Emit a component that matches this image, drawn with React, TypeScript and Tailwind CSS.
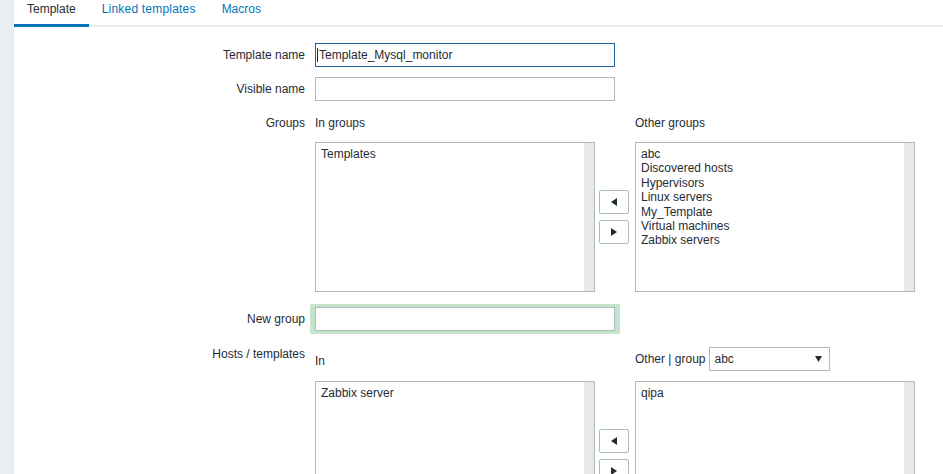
import React from "react";

const font = { fontFamily: '"Liberation Sans", Arial, sans-serif' };

function Caret({ dir }: { dir: "left" | "right" }) {
	return (
		<svg width="6" height="8" viewBox="0 0 6 8">
			{dir === "left" ? <path d="M6 0 L0 4 L6 8 Z" fill="#1f2c33" /> : <path d="M0 0 L6 4 L0 8 Z" fill="#1f2c33" />}
		</svg>
	);
}

function ListBox({ items }: { items: string[] }) {
	return (
		<div className="flex h-[150px] w-[280px] border border-[#acbbc2] bg-white">
			<div className="flex-1 pl-[5px] pt-[4px] leading-[14.4px]">
				{items.map((item) => <div key={item}>{item}</div>)}
			</div>
			<div className="w-[10px] bg-[#e8e8e8]" />
		</div>
	);
}

function MoveButtons() {
	return (
		<div className="flex w-[40px] flex-col items-start justify-center gap-[6px] pl-[4px]">
			<button className="flex h-[24px] w-[30px] items-center justify-center rounded-[2px] border border-[#acbbc2] bg-white">
				<Caret dir="left" />
			</button>
			<button className="flex h-[24px] w-[30px] items-center justify-center rounded-[2px] border border-[#acbbc2] bg-white">
				<Caret dir="right" />
			</button>
		</div>
	);
}

function Label({ children, className }: { children: React.ReactNode; className?: string }) {
	return <div className={`w-[301px] shrink-0 pr-[10px] text-right leading-[14px] ${className ?? ""}`}>{children}</div>;
}

export default function App() {
	return (
		<div className="flex h-[474px] w-[943px] overflow-hidden bg-white text-[12px] text-[#1f2c33]" style={font}>
			<div className="w-[14px] shrink-0 bg-[#ebeef0]" />
			<div className="flex-1">
				<div className="flex h-[27px] border-b-2 border-[#ebeef0]">
					<div className="-mb-[2px] border-b-[3px] border-[#0275b8] px-[13px] pt-[2px] leading-[14px]">Template</div>
					<div className="px-[13px] pt-[2px] leading-[14px] tracking-[0.2px] text-[#0275b8]">Linked templates</div>
					<div className="px-[13px] pt-[2px] leading-[14px] text-[#0275b8]">Macros</div>
				</div>

				<div className="mt-[16px] flex items-center">
					<Label>Template name</Label>
					<div className="flex h-[24px] w-[300px] items-center border border-[#1f65a6] pl-[1px]">
						<span className="mr-[1px] h-[14px] w-px bg-[#1f2c33]" />
						<span>Template_Mysql_monitor</span>
					</div>
				</div>

				<div className="mt-[10px] flex items-center">
					<Label>Visible name</Label>
					<div className="h-[24px] w-[300px] border border-[#acbbc2]" />
				</div>

				<div className="mt-[15px] flex">
					<Label>Groups</Label>
					<div>
						<div className="flex">
							<div className="w-[320px] leading-[14px]">In groups</div>
							<div className="leading-[14px]">Other groups</div>
						</div>
						<div className="mt-[12px] flex">
							<ListBox items={["Templates"]} />
							<MoveButtons />
							<ListBox items={["abc", "Discovered hosts", "Hypervisors", "Linux servers", "My_Template", "Virtual machines", "Zabbix servers"]} />
						</div>
					</div>
				</div>

				<div className="mt-[12px] flex items-center">
					<Label>New group</Label>
					<div className="-ml-[5px] rounded-[2px] bg-[#c6e4c9] px-[5px] py-[3px]">
						<div className="h-[24px] w-[300px] border border-[#acbbc2] bg-white" />
					</div>
				</div>

				<div className="mt-[13px] flex">
					<Label>Hosts / templates</Label>
					<div>
						<div className="flex h-[24px] items-center">
							<div className="w-[320px] pt-[4px] leading-[14px]">In</div>
							<div className="flex items-center">
								<span className="mr-[3px]">Other | group</span>
								<div className="flex h-[24px] w-[121px] items-center justify-between border border-[#acbbc2] pl-[5px] pr-[7px]">
									<span>abc</span>
									<svg width="7" height="6" viewBox="0 0 7 6"><path d="M0 0 H7 L3.5 6 Z" fill="#1f2c33" /></svg>
								</div>
							</div>
						</div>
						<div className="mt-[10px] flex">
							<ListBox items={["Zabbix server"]} />
							<MoveButtons />
							<ListBox items={["qipa"]} />
						</div>
					</div>
				</div>
			</div>
		</div>
	);
}
